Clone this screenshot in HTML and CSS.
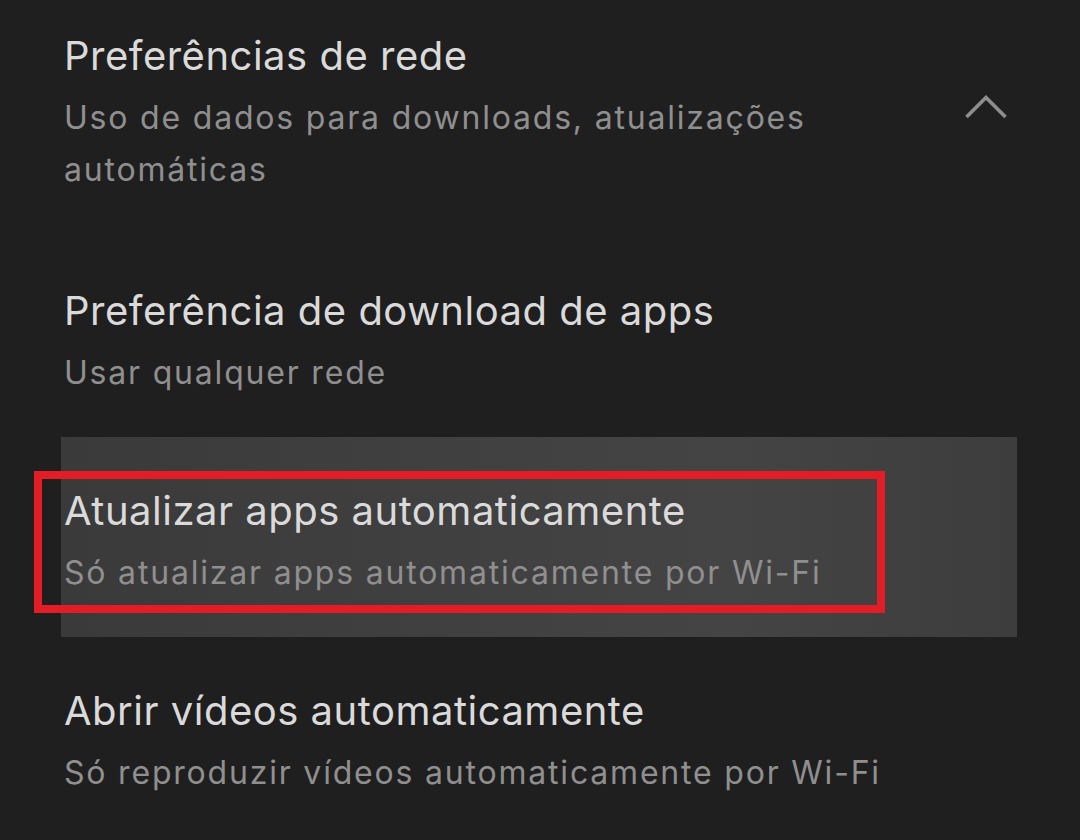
FILE: index.html
```html
<!DOCTYPE html>
<html lang="pt">
<head>
<meta charset="utf-8">
<title>Preferências</title>
<link rel="stylesheet" href="styles.css">
</head>
<body>
<div class="screen">
  <div class="list">
    <div class="item item-first">
      <div class="texts">
        <div class="title">Preferências de rede</div>
        <div class="sub">Uso de dados para downloads, atualizações automáticas</div>
      </div>
      <svg class="chev" width="60" height="40" viewBox="0 0 60 40">
        <polyline points="10.5,29 30,9.5 49.5,29" fill="none" stroke="#8e8e8e" stroke-width="3.6"/>
      </svg>
    </div>
    <div class="item">
      <div class="texts">
        <div class="title">Preferência de download de apps</div>
        <div class="sub">Usar qualquer rede</div>
      </div>
    </div>
    <div class="item item-active">
      <div class="texts">
        <div class="title">Atualizar apps automaticamente</div>
        <div class="sub">Só atualizar apps automaticamente por Wi-Fi</div>
      </div>
      <div class="mark"></div>
    </div>
    <div class="item">
      <div class="texts">
        <div class="title">Abrir vídeos automaticamente</div>
        <div class="sub">Só reproduzir vídeos automaticamente por Wi-Fi</div>
      </div>
    </div>
  </div>
</div>
</body>
</html>
```

FILE: styles.css
```css
html, body {
  margin: 0;
  padding: 0;
  background: #1f1f1f;
}
.screen {
  width: 1080px;
  height: 840px;
  overflow: hidden;
  background: #1f1f1f;
  font-family: Inter, Roboto, sans-serif;
}
.list {
  margin-top: -18px;
  padding: 0 63px 0 61px;
  display: flex;
  flex-direction: column;
}
.item {
  position: relative;
  display: flex;
  align-items: flex-start;
  padding: 46px 0 38px 3px;
}
.item-first {
  padding-bottom: 41px;
}
.item-first .texts {
  padding-right: 130px;
}
.texts {
  flex: 1;
  min-width: 0;
}
.title {
  font-size: 40px;
  line-height: 56px;
  letter-spacing: 0.5px;
  color: #dadada;
  white-space: nowrap;
}
.sub {
  margin-top: 8px;
  font-size: 32px;
  line-height: 52px;
  letter-spacing: 1.8px;
  color: #8f8f8f;
}
.chev {
  position: absolute;
  right: 1px;
  top: 106px;
}
.item-active {
  background: linear-gradient(90deg, #3a3a3a 0%, #404040 40%, #444444 70%, #3d3d3d 100%);
}
.mark {
  position: absolute;
  left: -27px;
  top: 34px;
  width: 835px;
  height: 126px;
  border: 8px solid #e31d25;
}
```
